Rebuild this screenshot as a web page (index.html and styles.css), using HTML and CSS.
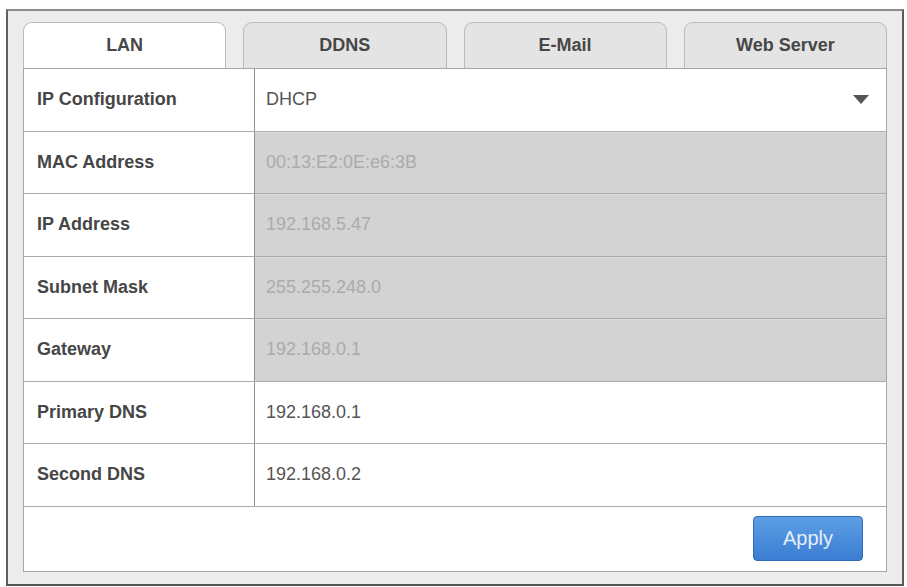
FILE: index.html
```html
<!DOCTYPE html>
<html lang="en">
<head>
    <meta charset="UTF-8">
    <meta name="viewport" content="width=device-width, initial-scale=1.0">
    <title>Network Settings</title>
    <link rel="stylesheet" href="styles.css">
</head>
<body>

    <div class="panel">
        <!-- Tab strip -->
        <div class="tabs">
            <div class="tab active">LAN</div>
            <div class="tab">DDNS</div>
            <div class="tab">E-Mail</div>
            <div class="tab">Web Server</div>
        </div>

        <!-- LAN settings -->
        <div class="settings">
            <div class="row">
                <div class="label">IP Configuration</div>
                <div class="value select">DHCP <span class="caret"></span></div>
            </div>
            <div class="row">
                <div class="label">MAC Address</div>
                <div class="value locked">00:13:E2:0E:e6:3B</div>
            </div>
            <div class="row">
                <div class="label">IP Address</div>
                <div class="value locked">192.168.5.47</div>
            </div>
            <div class="row">
                <div class="label">Subnet Mask</div>
                <div class="value locked">255.255.248.0</div>
            </div>
            <div class="row">
                <div class="label">Gateway</div>
                <div class="value locked">192.168.0.1</div>
            </div>
            <div class="row">
                <div class="label">Primary DNS</div>
                <div class="value">192.168.0.1</div>
            </div>
            <div class="row">
                <div class="label">Second DNS</div>
                <div class="value">192.168.0.2</div>
            </div>

            <div class="footer">
                <button type="button" class="apply">Apply</button>
            </div>
        </div>
    </div>

</body>
</html>
```

FILE: styles.css
```css
* {
    margin: 0;
    padding: 0;
    box-sizing: border-box;
}

body {
    font-family: 'Liberation Sans', Arial, sans-serif;
    background-color: #ffffff;
}

.panel {
    width: 898px;
    height: 577px;
    margin: 9px 0 0 6px;
    padding: 11px 15px 12px 15px;
    border: 2px solid;
    border-color: #8c8c8c #5a5a5a #555555 #5f5f5f;
    background-color: #ececec;
    display: flex;
    flex-direction: column;
}

/* Tabs */
.tabs {
    display: flex;
    gap: 17px;
    height: 46px;
}

.tab {
    flex: 1;
    display: flex;
    align-items: center;
    justify-content: center;
    padding-bottom: 1px;
    border: 1px solid #bababa;
    border-bottom: none;
    border-radius: 9px 9px 0 0;
    background-color: #e4e4e4;
    font-size: 18px;
    font-weight: bold;
    color: #474747;
}

.tab.active {
    background-color: #ffffff;
}

/* Settings table */
.settings {
    border: 1px solid #a6a6a6;
    background-color: #ffffff;
}

.row {
    display: grid;
    grid-template-columns: 230px 1fr;
    height: 62.5px;
    border-bottom: 1px solid #ababab;
}

.label {
    display: flex;
    align-items: center;
    padding-left: 13px;
    font-size: 18px;
    font-weight: bold;
    color: #464646;
}

.value {
    display: flex;
    align-items: center;
    padding-left: 11px;
    border-left: 1px solid #8f8f8f;
    font-size: 18px;
    color: #555555;
}

.value.locked {
    background-color: #d3d3d3;
    box-shadow: inset 0 1px 0 #dedede;
    color: #ababab;
}

.caret {
    margin-left: auto;
    margin-right: 17px;
    width: 0;
    height: 0;
    border-left: 8px solid transparent;
    border-right: 8px solid transparent;
    border-top: 9px solid #555555;
}

.footer {
    height: 64.5px;
    display: flex;
    justify-content: flex-end;
    align-items: center;
    padding-right: 23px;
}

.apply {
    width: 110px;
    height: 45px;
    border: 1px solid #2f6bbd;
    border-radius: 4px;
    background: linear-gradient(#5d9fe5, #3a7dd2);
    color: #e6eefa;
    font-family: 'Liberation Sans', Arial, sans-serif;
    font-size: 20px;
    cursor: pointer;
}
```
